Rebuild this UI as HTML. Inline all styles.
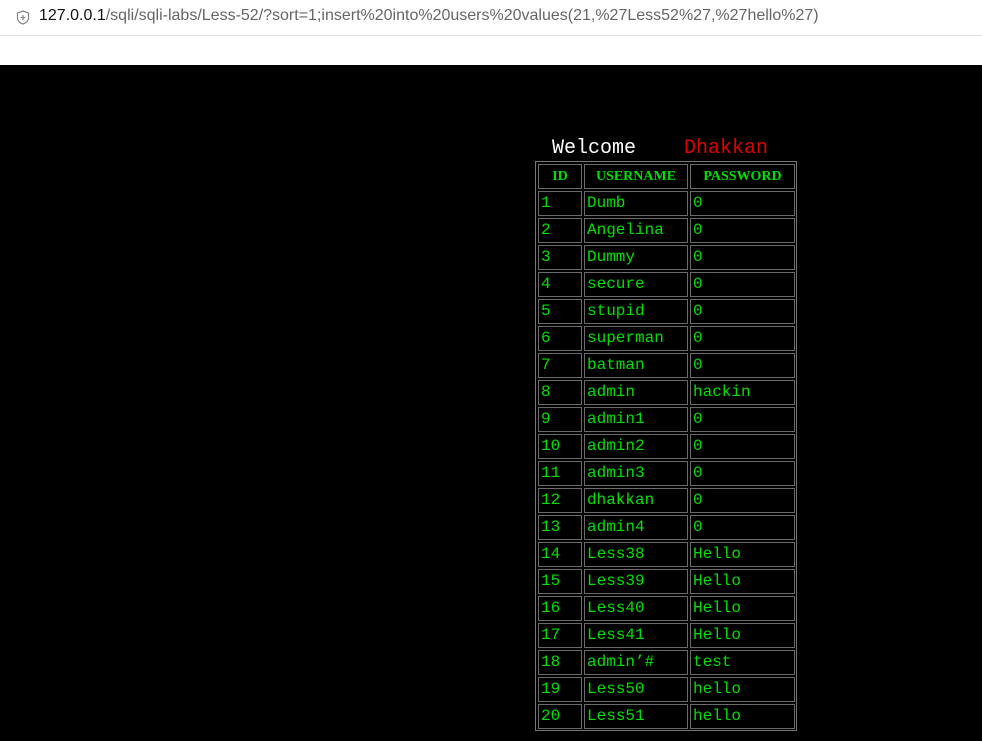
<!DOCTYPE html>
<html><head><meta charset="utf-8"><style>
body{margin:0;width:982px;height:741px;background:#000;position:relative;overflow:hidden;font-family:"Liberation Mono","Noto Sans CJK SC",monospace}
#bar{position:absolute;left:0;top:0;width:982px;height:35px;background:#fff;border-bottom:1px solid #e3e3e3}
#gap{position:absolute;left:0;top:36px;width:982px;height:29px;background:#fff}
#url{position:absolute;left:39px;top:7px;font-family:"Liberation Sans",sans-serif;font-size:16px;color:#666;white-space:nowrap}
#url b{font-weight:normal;color:#111}
#sh{position:absolute;left:16px;top:10px}
.c{position:absolute;height:23px;border:1px solid #6a6a6a;color:#00e000;font-size:16px;line-height:23px;padding-left:2px;box-sizing:content-box;white-space:nowrap;overflow:hidden}
.h{font-weight:bold;text-align:center;padding-left:0;font-family:"Liberation Serif",serif;font-size:14px;line-height:24px}
#outer{position:absolute;left:535px;top:161px;width:260px;height:568px;border:1px solid #777}
</style></head><body>
<div id="bar"><svg id="sh" width="14" height="15" viewBox="0 0 14 15"><path d="M7 1 L12.5 3 V8 C12.5 11 10 13 7 14 C4 13 1.5 11 1.5 8 V3 Z" fill="none" stroke="#888" stroke-width="1.2"/><path d="M7 5 V10 M4.5 7.5 H9.5" stroke="#888" stroke-width="1.2"/></svg>
<div id="url"><b>127.0.0.1</b>/sqli/sqli-labs/Less-52/?sort=1;insert%20into%20users%20values(21,%27Less52%27,%27hello%27)</div></div>
<div id="gap"></div>
<div style="position:absolute;left:552px;top:137px;font-size:20px;color:#fff">Welcome</div>
<div style="position:absolute;left:684px;top:137px;font-size:20px;color:#e00000">Dhakkan</div>
<div id="outer"></div>
<div id="t"></div>
<script>
var rows=[["1","Dumb","0"],["2","Angelina","0"],["3","Dummy","0"],["4","secure","0"],["5","stupid","0"],["6","superman","0"],["7","batman","0"],["8","admin","hackin"],["9","admin1","0"],["10","admin2","0"],["11","admin3","0"],["12","dhakkan","0"],["13","admin4","0"],["14","Less38","Hello"],["15","Less39","Hello"],["16","Less40","Hello"],["17","Less41","Hello"],["18","admin’#","test"],["19","Less50","hello"],["20","Less51","hello"]];
var cols=[[538,40],[584,100],[690,101]];
var h='';
var hd=["ID","USERNAME","PASSWORD"];
for(var j=0;j<3;j++)h+='<div class="c h" style="left:'+cols[j][0]+'px;top:164px;width:'+(cols[j][1]+2)+'px">'+hd[j]+'</div>';
for(var i=0;i<rows.length;i++){var y=191+27*i;for(var j=0;j<3;j++)h+='<div class="c" style="left:'+cols[j][0]+'px;top:'+y+'px;width:'+cols[j][1]+'px">'+rows[i][j]+'</div>';}
document.getElementById('t').innerHTML=h;
</script>
</body></html>
